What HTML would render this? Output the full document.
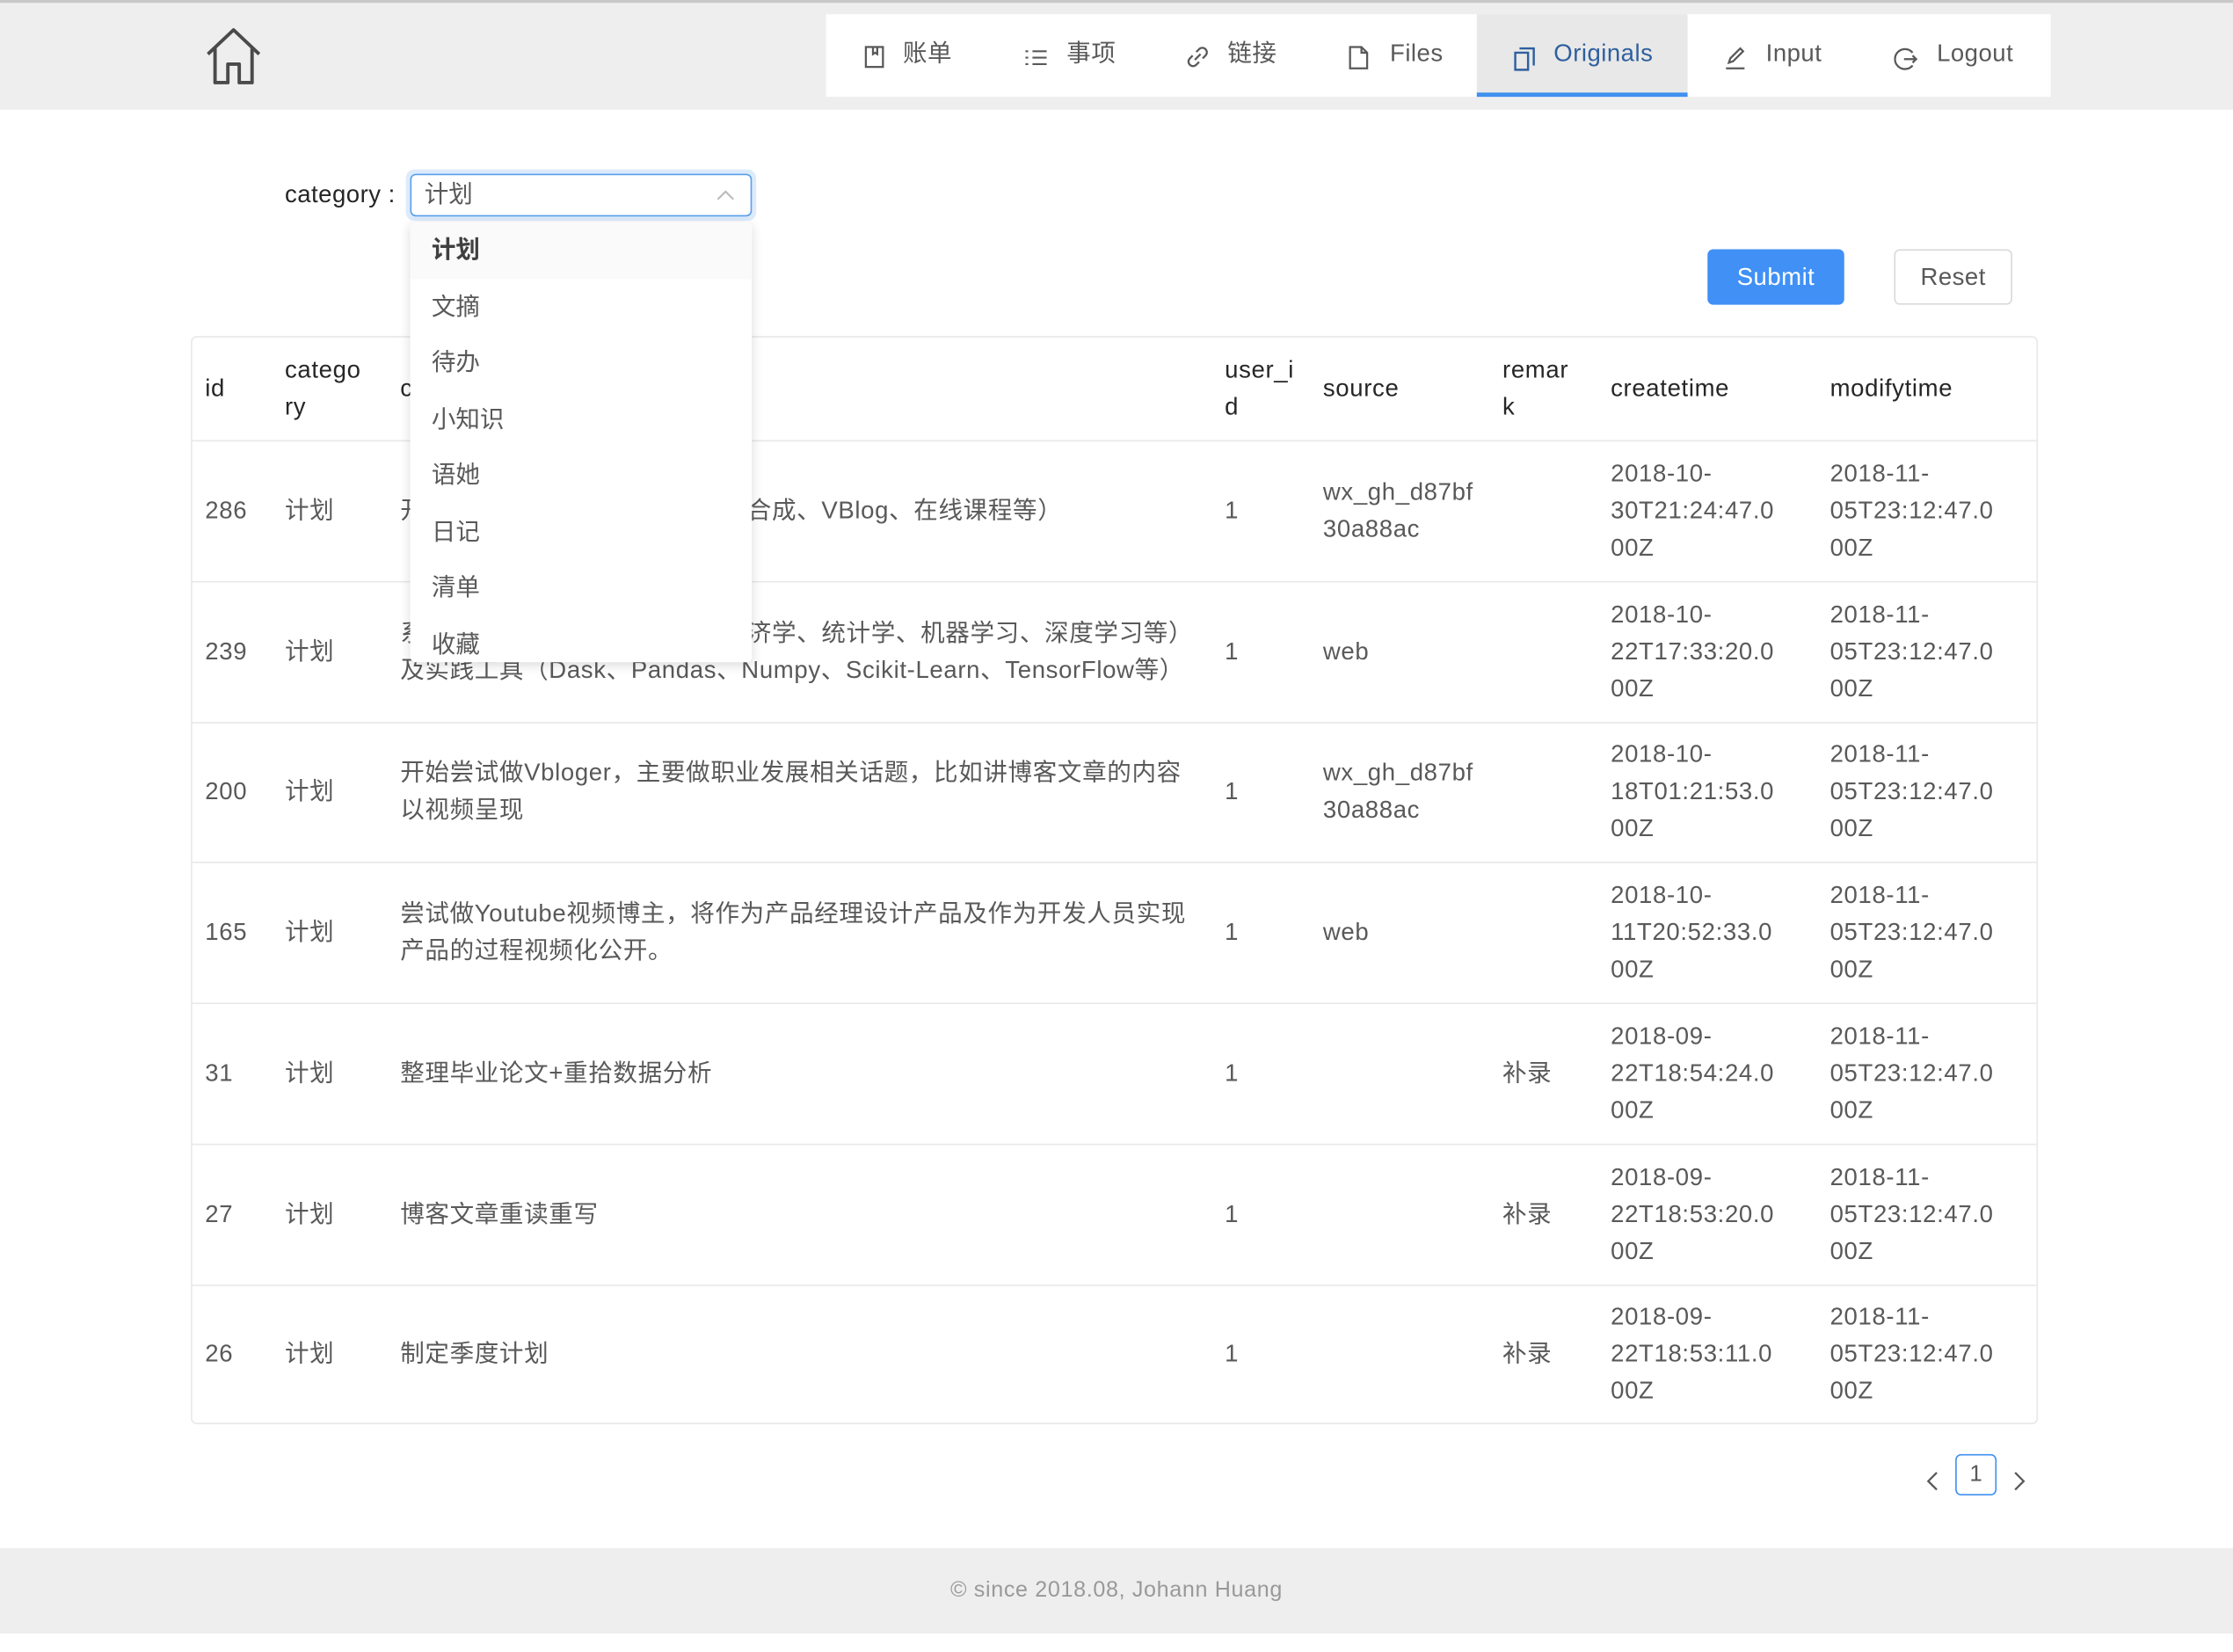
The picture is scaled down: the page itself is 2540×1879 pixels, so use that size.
<!DOCTYPE html>
<html><head><meta charset="utf-8">
<style>
html,body{margin:0;padding:0;background:#fff;overflow:hidden;width:2540px;height:1878px}
#w{position:absolute;left:0;top:0;width:1568px;height:1160px;transform:scale(1.6199);transform-origin:0 0;font-family:"Liberation Sans","Noto Sans CJK SC",sans-serif;color:#595959;font-size:17px}
.a{position:absolute}
.hdr{left:0;top:0;width:1568px;height:77px;background:#eee;border-top:2px solid #c8c8c8;box-sizing:border-box}
.nav{left:580px;top:10px;width:860px;height:58px;background:#fff}
.ni{position:absolute;top:0;height:58px;line-height:56px;font-size:17px;color:#595959;white-space:nowrap;letter-spacing:0.3px}
.ni svg{position:absolute;top:22px}
.act{background:#e8e8e8;border-bottom:3px solid #4090f0;box-sizing:border-box;color:#2f5f9e}
.cell{position:absolute;display:flex;align-items:center;line-height:26px;white-space:nowrap;letter-spacing:0.4px}
.row{position:absolute;left:134px;width:1297px;border-top:1px solid #e8e8e8}
.hd{color:#262626}
.dd div{height:39.5px;line-height:39.5px;padding-left:15px;color:#595959}
</style></head><body><div id="w">
<div class="a hdr"></div>
<svg class="a" style="left:144px;top:19px" width="40" height="42" viewBox="0 0 40 42" fill="none" stroke="#4a4a4a" stroke-width="2.4" stroke-linejoin="round"><path d="M2 19 L20 2 L38 19 M7 15 V39 H16 V26 H24 V39 H33 V15"/></svg>
<div class="a nav">
 <div class="ni" style="left:27px"><svg style="left:0" width="14" height="16" viewBox="0 0 14 16" fill="none" stroke="#595959" stroke-width="1.4"><rect x="1" y="1" width="12" height="14"/><path d="M9 1v5l-1.5-1L6 6V1"/></svg><span style="margin-left:27px">账单</span></div>
 <div class="ni" style="left:140px"><svg style="left:0;top:24px" width="15" height="13" viewBox="0 0 15 13" fill="none" stroke="#595959" stroke-width="1.3"><path d="M0 2h2M5 2h10M0 6.5h2M5 6.5h10M0 11h2M5 11h10"/></svg><span style="margin-left:29px">事项</span></div>
 <div class="ni" style="left:253px"><svg style="left:0;top:22px" width="16" height="16" viewBox="0 0 16 16" fill="none" stroke="#595959" stroke-width="1.4"><path d="M7 4.5l2-2a3 3 0 0 1 4.5 4.5l-2 2M9 11.5l-2 2a3 3 0 0 1-4.5-4.5l2-2M6 10l4-4"/></svg><span style="margin-left:29px">链接</span></div>
 <div class="ni" style="left:367px"><svg style="left:0" width="14" height="17" viewBox="0 0 14 17" fill="none" stroke="#595959" stroke-width="1.4"><path d="M1 1h8l4 4v11H1z M9 1v4h4"/></svg><span style="margin-left:29px">Files</span></div>
 <div class="ni act" style="left:457px;width:148px"><svg style="left:26px;top:23px" width="15" height="17" viewBox="0 0 15 17" fill="none" stroke="#2f5f9e" stroke-width="1.5"><path d="M4 1h10v12M1 4h9v12H1z"/></svg><span style="margin-left:54px">Originals</span></div>
 <div class="ni" style="left:631px"><svg style="left:0;top:22px" width="16" height="17" viewBox="0 0 16 17" fill="none" stroke="#595959" stroke-width="1.4"><path d="M3 12l1-3 7-7 2 2-7 7z M1 16h13"/></svg><span style="margin-left:29px">Input</span></div>
 <div class="ni" style="left:750px"><svg style="left:0;top:23px" width="17" height="17" viewBox="0 0 17 17" fill="none" stroke="#595959" stroke-width="1.4"><path d="M13 4a7 7 0 1 0 0 9 M7 8.5h9M13 6l2.5 2.5L13 11"/></svg><span style="margin-left:30px">Logout</span></div>
</div>

<div class="a" style="left:200px;top:125px;line-height:24px;color:#262626;letter-spacing:0.3px">category :</div>
<div class="a" style="left:285px;top:119px;width:246px;height:36px;border-radius:6px;background:#dcebfc"></div>
<div class="a" style="left:288px;top:122px;width:240px;height:30px;border:1px solid #5a9fea;border-radius:4px;box-sizing:border-box;background:#fff"></div>
<div class="a" style="left:298px;top:125px;line-height:24px;color:#595959">计划</div>
<svg class="a" style="left:503px;top:133px" width="13" height="8" viewBox="0 0 13 8" fill="none" stroke="#bbb" stroke-width="1.3"><path d="M1 7L6.5 1.5 12 7"/></svg>

<div class="a" style="left:1199px;top:175px;width:96px;height:39px;background:#4090f5;border-radius:4px;color:#fff;text-align:center;line-height:39px;letter-spacing:0.3px">Submit</div>
<div class="a" style="left:1330px;top:175px;width:83px;height:39px;border:1px solid #d9d9d9;box-sizing:border-box;border-radius:4px;color:#595959;text-align:center;line-height:37px;letter-spacing:0.3px">Reset</div>

<div class="a" style="left:134px;top:236px;width:1297px;height:764px;border:1px solid #e8e8e8;box-sizing:border-box;border-radius:4px"></div>
<div class="hd">
<div class="cell" style="left:144px;top:236px;height:73px">id</div>
<div class="cell" style="left:200px;top:236px;height:73px">catego<br>ry</div>
<div class="cell" style="left:281px;top:236px;height:73px">content</div>
<div class="cell" style="left:860px;top:236px;height:73px">user_i<br>d</div>
<div class="cell" style="left:929px;top:236px;height:73px">source</div>
<div class="cell" style="left:1055px;top:236px;height:73px">remar<br>k</div>
<div class="cell" style="left:1131px;top:236px;height:73px">createtime</div>
<div class="cell" style="left:1285px;top:236px;height:73px">modifytime</div>
</div>
<div id="rows"></div>
<script>
var R=[
["286","开始尝试做输出（如文章、视频合成、VBlog、在线课程等）","1","wx_gh_d87bf<br>30a88ac","","2018-10-<br>30T21:24:47.0<br>00Z"],
["239","系统学习数据科学相关理论（经济学、统计学、机器学习、深度学习等）<br>及实践工具（Dask、Pandas、Numpy、Scikit-Learn、TensorFlow等）","1","web","","2018-10-<br>22T17:33:20.0<br>00Z"],
["200","开始尝试做Vbloger，主要做职业发展相关话题，比如讲博客文章的内容<br>以视频呈现","1","wx_gh_d87bf<br>30a88ac","","2018-10-<br>18T01:21:53.0<br>00Z"],
["165","尝试做Youtube视频博主，将作为产品经理设计产品及作为开发人员实现<br>产品的过程视频化公开。","1","web","","2018-10-<br>11T20:52:33.0<br>00Z"],
["31","整理毕业论文+重拾数据分析","1","","补录","2018-09-<br>22T18:54:24.0<br>00Z"],
["27","博客文章重读重写","1","","补录","2018-09-<br>22T18:53:20.0<br>00Z"],
["26","制定季度计划","1","","补录","2018-09-<br>22T18:53:11.0<br>00Z"]];
var h="",tops=[309,408,507,605,704,803,902];
R.forEach(function(r,i){var t=tops[i],H=(tops[i+1]||1000)-t;
h+='<div class="row" style="top:'+t+'px"></div>';
var L=[[144,r[0]],[200,"计划"],[281,r[1]],[860,r[2]],[929,r[3]],[1055,r[4]],[1131,r[5]],[1285,"2018-11-<br>05T23:12:47.0<br>00Z"]];
L.forEach(function(c){h+='<div class="cell" style="left:'+c[0]+'px;top:'+t+'px;height:'+H+'px"><div>'+c[1]+'</div></div>';});});
document.getElementById("rows").innerHTML=h;
</script>

<div class="a dd" style="left:288px;top:156px;width:240px;height:309px;background:#fff;box-shadow:0 2px 8px rgba(0,0,0,.15);border-radius:4px;overflow:hidden">
<div style="background:#fafafa;font-weight:bold;color:#404040">计划</div><div>文摘</div><div>待办</div><div>小知识</div><div>语她</div><div>日记</div><div>清单</div><div>收藏</div>
</div>

<svg class="a" style="left:1352px;top:1033px" width="10" height="14" viewBox="0 0 10 14" fill="none" stroke="#595959" stroke-width="1.4"><path d="M8 1L2 7l6 6"/></svg>
<div class="a" style="left:1373px;top:1021px;width:29px;height:29px;border:1px solid #4090f0;border-radius:4px;box-sizing:border-box;text-align:center;line-height:27px;color:#595959;font-size:16px">1</div>
<svg class="a" style="left:1413px;top:1033px" width="10" height="14" viewBox="0 0 10 14" fill="none" stroke="#595959" stroke-width="1.4"><path d="M2 1l6 6-6 6"/></svg>

<div class="a" style="left:0;top:1087px;width:1568px;height:60px;background:#eee;text-align:center;line-height:60px;color:#999;font-size:15.5px;letter-spacing:0.4px">© since 2018.08, Johann Huang</div>
</div></body></html>
